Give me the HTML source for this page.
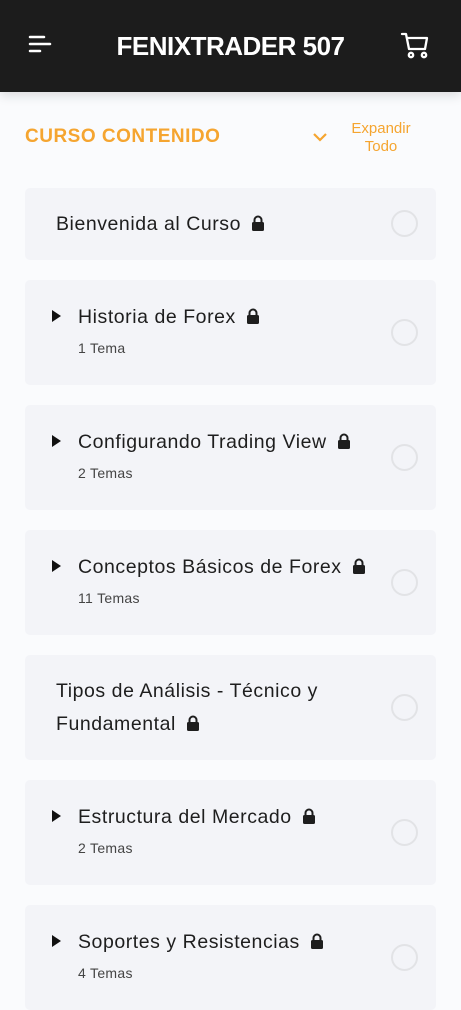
<!DOCTYPE html>
<html><head><meta charset="utf-8"><style>
*{margin:0;padding:0;box-sizing:border-box}
body{width:461px;height:999px;overflow:hidden;background:#fafbfd;font-family:"Liberation Sans",sans-serif;position:relative}
.hdr{position:absolute;left:0;top:0;width:461px;height:92px;background:#1c1c1c;box-shadow:0 4px 10px rgba(0,0,0,.12)}
.hdr .t{position:absolute;left:0;right:0;top:31px;text-align:center;color:#fff;font-size:26px;font-weight:bold;letter-spacing:-0.5px}
.sec{position:absolute;left:25px;top:126px;color:#f5a530;font-size:19px;font-weight:bold;letter-spacing:0.5px}
.exp{position:absolute;left:336px;top:120px;width:90px;text-align:center;color:#f5a530;font-size:15px;line-height:18px}
.card{position:absolute;left:25px;width:411px;background:#f3f4f8;border-radius:5px}
.tt{position:absolute;left:53px;font-size:19.5px;letter-spacing:0.55px;color:#1e1e1e}
.tt.n{left:31px}
.st{position:absolute;left:53px;font-size:14px;letter-spacing:0.3px;color:#444}
.tri{position:absolute;left:27px;width:0;height:0;border-left:9px solid #111;border-top:6px solid transparent;border-bottom:6px solid transparent}
.c{position:absolute;left:366px;width:27px;height:27px;border:2px solid #e2e3e6;border-radius:50%}
.lk{display:inline-block;vertical-align:-1px;margin-left:10px}
</style></head><body>
<div class="hdr">
<svg style="position:absolute;left:28px;top:34px" width="24" height="20"><g stroke="#fff" stroke-width="2.5" stroke-linecap="round"><line x1="2" y1="3" x2="16" y2="3"/><line x1="2" y1="10" x2="22" y2="10"/><line x1="2" y1="17" x2="12" y2="17"/></g></svg>
<div class="t">FENIXTRADER 507</div>
<svg style="position:absolute;left:400px;top:32px" width="30" height="28" viewBox="0 0 30 28"><g fill="none" stroke="#fff" stroke-width="2.3" stroke-linejoin="round" stroke-linecap="round"><path d="M2 2h4l3 15h16l2-11H8"/><circle cx="11" cy="23" r="2.2"/><circle cx="24" cy="23" r="2.2"/></g></svg>
</div>
<div class="sec">CURSO CONTENIDO</div>
<svg style="position:absolute;left:312px;top:131px" width="16" height="12"><path d="M2 3l6 6 6-6" fill="none" stroke="#f5a530" stroke-width="2.2"/></svg>
<div class="exp">Expandir<br>Todo</div>

<div class="card" style="top:188px;height:72px"><div class="tt n" style="top:25px">Bienvenida al Curso<svg class="lk" width="14" height="16" viewBox="0 0 14 16"><path d="M3.5 7V5a3.5 3.5 0 0 1 7 0v2" fill="none" stroke="#1e1e1e" stroke-width="2"/><rect x="1" y="7" width="12" height="9" rx="1.5" fill="#1e1e1e"/></svg></div><div class="c" style="top:22px"></div></div>

<div class="card" style="top:280px;height:105px"><div class="tri" style="top:30px"></div><div class="tt" style="top:26px">Historia de Forex<svg class="lk" width="14" height="16" viewBox="0 0 14 16"><path d="M3.5 7V5a3.5 3.5 0 0 1 7 0v2" fill="none" stroke="#1e1e1e" stroke-width="2"/><rect x="1" y="7" width="12" height="9" rx="1.5" fill="#1e1e1e"/></svg></div><div class="st" style="top:60px">1 Tema</div><div class="c" style="top:39px"></div></div>

<div class="card" style="top:405px;height:105px"><div class="tri" style="top:30px"></div><div class="tt" style="top:26px">Configurando Trading View<svg class="lk" width="14" height="16" viewBox="0 0 14 16"><path d="M3.5 7V5a3.5 3.5 0 0 1 7 0v2" fill="none" stroke="#1e1e1e" stroke-width="2"/><rect x="1" y="7" width="12" height="9" rx="1.5" fill="#1e1e1e"/></svg></div><div class="st" style="top:60px">2 Temas</div><div class="c" style="top:39px"></div></div>

<div class="card" style="top:530px;height:105px"><div class="tri" style="top:30px"></div><div class="tt" style="top:26px">Conceptos Básicos de Forex<svg class="lk" width="14" height="16" viewBox="0 0 14 16"><path d="M3.5 7V5a3.5 3.5 0 0 1 7 0v2" fill="none" stroke="#1e1e1e" stroke-width="2"/><rect x="1" y="7" width="12" height="9" rx="1.5" fill="#1e1e1e"/></svg></div><div class="st" style="top:60px">11 Temas</div><div class="c" style="top:39px"></div></div>

<div class="card" style="top:655px;height:105px"><div class="tt n" style="top:20px;line-height:33px">Tipos de Análisis - Técnico y<br>Fundamental<svg class="lk" width="14" height="16" viewBox="0 0 14 16"><path d="M3.5 7V5a3.5 3.5 0 0 1 7 0v2" fill="none" stroke="#1e1e1e" stroke-width="2"/><rect x="1" y="7" width="12" height="9" rx="1.5" fill="#1e1e1e"/></svg></div><div class="c" style="top:39px"></div></div>

<div class="card" style="top:780px;height:105px"><div class="tri" style="top:30px"></div><div class="tt" style="top:26px">Estructura del Mercado<svg class="lk" width="14" height="16" viewBox="0 0 14 16"><path d="M3.5 7V5a3.5 3.5 0 0 1 7 0v2" fill="none" stroke="#1e1e1e" stroke-width="2"/><rect x="1" y="7" width="12" height="9" rx="1.5" fill="#1e1e1e"/></svg></div><div class="st" style="top:60px">2 Temas</div><div class="c" style="top:39px"></div></div>

<div class="card" style="top:905px;height:105px"><div class="tri" style="top:30px"></div><div class="tt" style="top:26px">Soportes y Resistencias<svg class="lk" width="14" height="16" viewBox="0 0 14 16"><path d="M3.5 7V5a3.5 3.5 0 0 1 7 0v2" fill="none" stroke="#1e1e1e" stroke-width="2"/><rect x="1" y="7" width="12" height="9" rx="1.5" fill="#1e1e1e"/></svg></div><div class="st" style="top:60px">4 Temas</div><div class="c" style="top:39px"></div></div>
</body></html>
